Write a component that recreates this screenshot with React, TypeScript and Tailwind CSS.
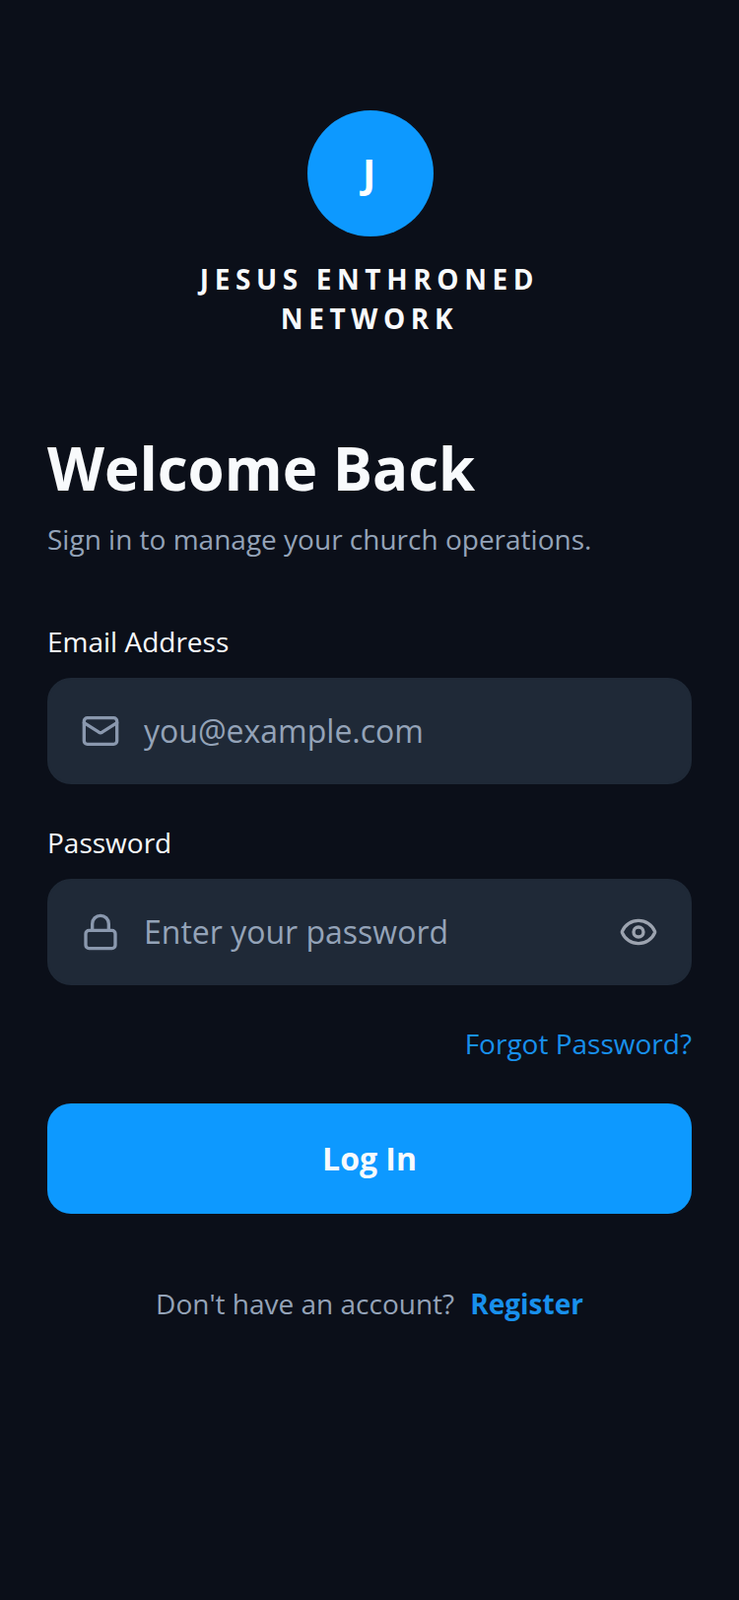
import { Mail, Lock, Eye } from "lucide-react";

export default function App() {
  return (
    <div className="min-h-[1624px] bg-[#0b0f19] px-12 pt-28 font-['Open_Sans',sans-serif] text-[#f8fafc]">
      <div className="flex flex-col items-center">
        <div className="ml-[2px] flex h-32 w-32 items-center justify-center rounded-full bg-[#0d99ff] pb-[2px] pr-[3px] text-[40px] font-bold text-white">J</div>
        <div className="mt-[23px] pb-px text-center text-[28px] font-bold leading-10 tracking-[0.2em]">
          JESUS ENTHRONED
          <br />
          NETWORK
        </div>
      </div>
      <h1 className="mt-[95px] pb-px text-[60px] font-bold leading-[72px]">Welcome Back</h1>
      <p className="mt-4 h-10 text-[28px] leading-[38px] text-[#94a3b8]">Sign in to manage your church operations.</p>

      <label className="mt-16 block h-10 text-[28px] leading-[38px]">Email Address</label>
      <div className="mt-4 flex h-[108px] items-center gap-6 rounded-3xl border-2 border-[#1f2937] bg-[#1f2937] px-8">
        <Mail size={40} strokeWidth={2} className="shrink-0 text-[#8a98ae]" />
        <input
          placeholder="you@example.com"
          className="min-w-0 flex-1 bg-transparent text-[32px] outline-none placeholder:text-[#94a3b8]"
        />
      </div>

      <label className="mt-10 block h-10 text-[28px] leading-[38px]">Password</label>
      <div className="mt-4 flex h-[108px] items-center gap-6 rounded-3xl border-2 border-[#1f2937] bg-[#1f2937] px-8">
        <Lock size={40} strokeWidth={2} className="shrink-0 text-[#8a98ae]" />
        <input
          placeholder="Enter your password"
          className="min-w-0 flex-1 bg-transparent text-[32px] outline-none placeholder:text-[#94a3b8]"
        />
        <Eye size={40} strokeWidth={2} className="shrink-0 text-[#9ca3af]" />
      </div>

      <div className="mt-10 h-10 text-right text-[28px] leading-[38px] text-[#1890ec]">Forgot Password?</div>

      <button className="mt-10 flex h-28 w-full items-center justify-center rounded-3xl bg-[#0d99ff] text-[32px] font-bold">
        Log In
      </button>

      <div className="mt-[72px] flex h-10 justify-center gap-4 text-[28px] leading-[38px]">
        <span className="text-[#94a3b8]">Don't have an account?</span>
        <span className="font-bold text-[#1890ec]">Register</span>
      </div>
    </div>
  );
}
